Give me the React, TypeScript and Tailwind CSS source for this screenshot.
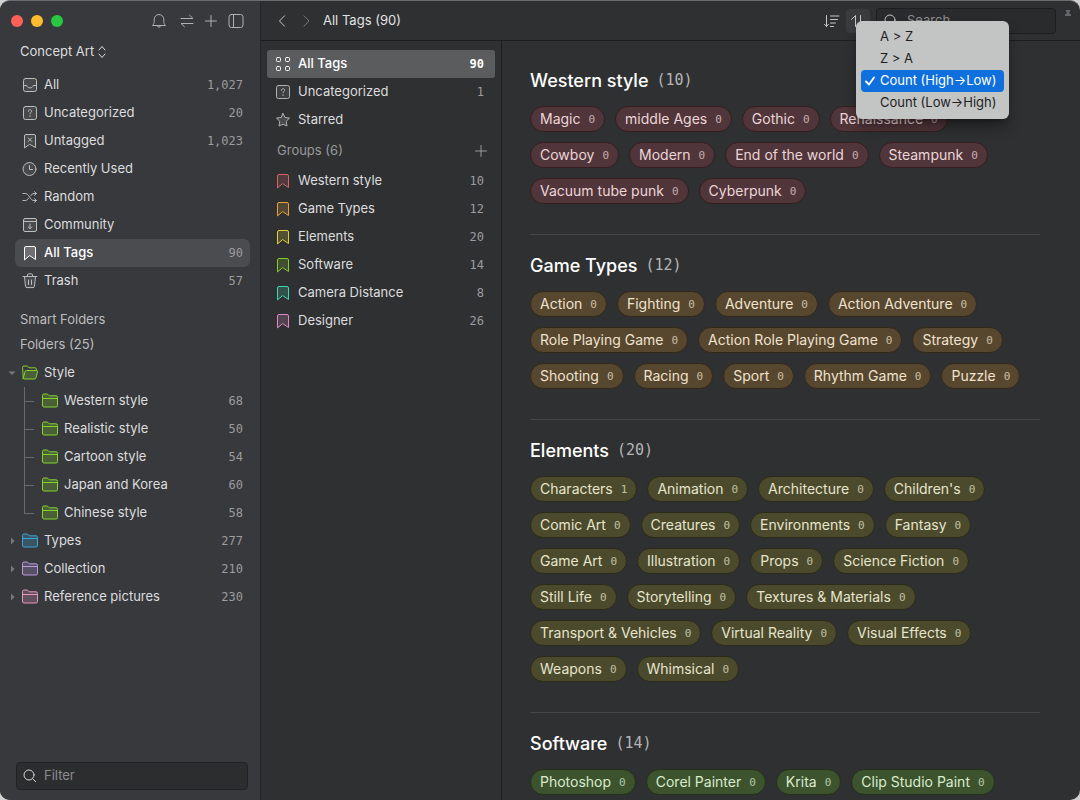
import React, { useState } from 'react';
import clsx from 'clsx';

const svgProps = {
  viewBox: '0 0 16 16',
  width: 16,
  height: 16,
  fill: 'none',
  stroke: 'currentColor',
  strokeLinecap: 'round' as const,
  strokeLinejoin: 'round' as const,
  'aria-hidden': true,
};

const icons: Record<string, React.ReactNode> = {
  inbox: (
    <>
      <rect x="1.5" y="1.5" width="13" height="13" rx="2" fill="currentColor" fillOpacity="0.12" />
      <path d="M1.5 8.5h3.2c.4 1.5 1.6 2.4 3.3 2.4s2.900-.9 3.300-2.400h3.200" />
    </>
  ),
  question: (
    <>
      <rect x="1.5" y="1.5" width="13" height="13" rx="2" fill="currentColor" fillOpacity="0.12" />
      <path d="M6.400 6.300c0-1 .7-1.600 1.600-1.600s1.600.6 1.600 1.500c0 1.200-1.600 1.200-1.600 2.600" />
      <path d="M8 11v.2" strokeWidth="1.3" />
    </>
  ),
  untagged: (
    <>
      <path d="M2.5 14.5V3A1.5 1.5 0 0 1 4 1.5h8A1.5 1.5 0 0 1 13.5 3v11.5L8 11.5z" fill="currentColor" fillOpacity="0.12" />
      <path d="M6.200 4.900l3.600 3.600M9.800 4.900L6.200 8.500" />
    </>
  ),
  clock: (
    <>
      <circle cx="7.5" cy="8" r="6.5" fill="currentColor" fillOpacity="0.12" />
      <path d="M7.5 4.5V8.5h3" />
    </>
  ),
  shuffle: (
    <>
      <path d="M1 4.500h2.500c3.500 0 4.500 7 8.500 7h2M1 11.500h2.500c1.300 0 2.200-1 3-2.300M8.800 6.700c.8-1.300 1.700-2.200 3.200-2.200h2" />
      <path d="M12.500 2.700l2 1.800-2 1.800M12.500 9.700l2 1.800-2 1.800" />
    </>
  ),
  community: (
    <>
      <rect x="1.5" y="1.5" width="13" height="13" rx="1.5" fill="currentColor" fillOpacity="0.12" />
      <path d="M1.5 4.500h13M8 7v4.500M6.300 10L8 11.700 9.700 10" />
    </>
  ),
  bookmark: (
    <path d="M2.500 14.500V3A1.500 1.500 0 0 1 4 1.500h8A1.500 1.500 0 0 1 13.500 3v11.500L8 10.800z" fill="currentColor" fillOpacity="0.2" />
  ),
  trash: (
    <>
      <path d="M1 3.500h14M5.500 3.300V2A1.200 1.200 0 0 1 6.700.8h2.600A1.200 1.200 0 0 1 10.500 2v1.300M6.500 7v4.500M9.500 7v4.500" />
      <path d="M2.500 3.500l1 9.800a1.500 1.500 0 0 0 1.500 1.300h6a1.500 1.500 0 0 0 1.500-1.300l1-9.800" fill="currentColor" fillOpacity="0.12" />
    </>
  ),
  grid: (
    <>
      <rect x="1.5" y="1.5" width="4" height="4" rx="1" />
      <rect x="10.500" y="1.5" width="4" height="4" rx="1" />
      <rect x="1.5" y="10.500" width="4" height="4" rx="1" />
      <rect x="10.500" y="10.500" width="4" height="4" rx="1" />
    </>
  ),
  star: (
    <path d="M8 1.500l2 4 4.500.6-3.300 3.200.8 4.700L8 12.200l-4 1.800.8-4.700L1.500 6.100 6 5.500z" fill="currentColor" fillOpacity="0.2" />
  ),
  folder: (
    <>
      <path d="M.5 12.500v-10A1.500 1.500 0 0 1 2 1h3.400l1.800 1.800H14a1.500 1.500 0 0 1 1.500 1.500v8.200A1.500 1.500 0 0 1 14 14H2A1.500 1.500 0 0 1 .5 12.500z" fill="currentColor" fillOpacity="0.25" />
      <path d="M.5 5.500h15" />
    </>
  ),
  folderOpen: (
    <>
      <path d="M1.200 13.200L.6 2.500A1.400 1.400 0 0 1 2 1h3.200L7 2.800h6a1.400 1.400 0 0 1 1.400 1.400v1.300" />
      <path d="M1.200 13.300L3 6.700a1.500 1.500 0 0 1 1.500-1.200h10a1 1 0 0 1 1 1.300l-1.500 6A1.500 1.500 0 0 1 12.500 14H1.900a.7.700 0 0 1-.7-.7z" fill="currentColor" fillOpacity="0.25" />
    </>
  ),
  search: (
    <>
      <circle cx="7" cy="7" r="5" />
      <path d="M10.700 10.700l3 3" />
    </>
  ),
  bell: (
    <path d="M1.800 12.200c1-1.200 1.400-2 1.400-3.700V6.300a4.800 4.800 0 0 1 9.600 0v2.200c0 1.700.4 2.500 1.400 3.700zM6.300 12.500a1.700 1.700 0 0 0 3.400 0" />
  ),
  swap: <path d="M2 5.500h12L10.500 2.200M14 10.500H2l3.500 3.300" />,
  plus: <path d="M8 2.500v11M2.500 8h11" />,
  panel: (
    <>
      <rect x="1" y="1.5" width="14" height="13" rx="2.5" />
      <path d="M5.500 1.500v13" />
    </>
  ),
  left: <path d="M10.500 2.800L5.500 8l5 5.200" />,
  right: <path d="M6 2.800L11 8l-5 5.200" />,
  sort: <path d="M2.500 2.500v11M.5 11.300l2 2.200 2-2.200M6.500 3h8.500M6.500 6.500h7M6.500 10h5M6.500 13.500h3" />,
  order: <path d="M5.500 13.500v-11L1.500 6.500M10.500 2.500v11L14.500 9.500" />,
};

function Icon({ name, className }: { name: string; className?: string }) {
  return (
    <svg {...svgProps} className={clsx('shrink-0', className)}>
      {icons[name]}
    </svg>
  );
}

const libraryItems = [
  { icon: 'inbox', label: 'All', count: '1,027' },
  { icon: 'question', label: 'Uncategorized', count: '20' },
  { icon: 'untagged', label: 'Untagged', count: '1,023' },
  { icon: 'clock', label: 'Recently Used' },
  { icon: 'shuffle', label: 'Random' },
  { icon: 'community', label: 'Community' },
  { icon: 'bookmark', label: 'All Tags', count: '90' },
  { icon: 'trash', label: 'Trash', count: '57' },
];

const styleFolders = [
  { label: 'Western style', count: 68 },
  { label: 'Realistic style', count: 50 },
  { label: 'Cartoon style', count: 54 },
  { label: 'Japan and Korea', count: 60 },
  { label: 'Chinese style', count: 58 },
];

const otherFolders = [
  { label: 'Types', count: 277, color: 'text-[#3ba6d8]' },
  { label: 'Collection', count: 210, color: 'text-[#b99ae0]' },
  { label: 'Reference pictures', count: 230, color: 'text-[#e597c0]' },
];

const tagGroups = [
  { label: 'Western style', count: 10, color: 'text-[#d9636b]' },
  { label: 'Game Types', count: 12, color: 'text-[#e8a23d]' },
  { label: 'Elements', count: 20, color: 'text-[#e0d13a]' },
  { label: 'Software', count: 14, color: 'text-[#84cc2e]' },
  { label: 'Camera Distance', count: 8, color: 'text-[#3fd6b0]' },
  { label: 'Designer', count: 26, color: 'text-[#dc8cc4]' },
];

const sections = [
  {
    title: 'Western style',
    count: 10,
    pill: 'bg-[#50353a] border-[#351d20] text-[#ecd5d7]',
    tags: ['Magic', 'middle Ages', 'Gothic', 'Renaissance', 'Cowboy', 'Modern', 'End of the world', 'Steampunk', 'Vacuum tube punk', 'Cyberpunk'],
  },
  {
    title: 'Game Types',
    count: 12,
    pill: 'bg-[#57472e] border-[#33291a] text-[#efe2cf]',
    tags: ['Action', 'Fighting', 'Adventure', 'Action Adventure', 'Role Playing Game', 'Action Role Playing Game', 'Strategy', 'Shooting', 'Racing', 'Sport', 'Rhythm Game', 'Puzzle'],
  },
  {
    title: 'Elements',
    count: 20,
    pill: 'bg-[#4b4a2c] border-[#2c2b18] text-[#e6e4cd]',
    tags: ['Characters', 'Animation', 'Architecture', "Children's", 'Comic Art', 'Creatures', 'Environments', 'Fantasy', 'Game Art', 'Illustration', 'Props', 'Science Fiction', 'Still Life', 'Storytelling', 'Textures & Materials', 'Transport & Vehicles', 'Virtual Reality', 'Visual Effects', 'Weapons', 'Whimsical'],
  },
  {
    title: 'Software',
    count: 14,
    pill: 'bg-[#3c532e] border-[#22311a] text-[#d9ebcd]',
    tags: ['Photoshop', 'Corel Painter', 'Krita', 'Clip Studio Paint'],
  },
];

const sortOptions = ['A > Z', 'Z > A', 'Count (High→Low)', 'Count (Low→High)'];

function Count({ children, className }: { children: React.ReactNode; className?: string }) {
  return (
    <span className={clsx("ml-auto font-['DejaVu_Sans_Mono',monospace] text-xs", className ?? 'text-[#9b9c9f]')}>
      {children}
    </span>
  );
}

function Sidebar() {
  const [active, setActive] = useState('All Tags');

  return (
    <aside className="flex w-[261px] shrink-0 flex-col border-r border-[#232426] bg-[#38393c]">
      <div className="flex h-10 items-center pr-4 pl-[11px] text-[#b0b1b3]">
        <div className="flex gap-2">
          <span className="size-3 rounded-full bg-[#fe5f57]" />
          <span className="size-3 rounded-full bg-[#febc2e]" />
          <span className="size-3 rounded-full bg-[#28c840]" />
        </div>
        <button aria-label="Notifications" className="ml-auto"><Icon name="bell" /></button>
        <button aria-label="Switch library" className="ml-3"><Icon name="swap" /></button>
        <button aria-label="Add" className="ml-2"><Icon name="plus" /></button>
        <button aria-label="Toggle sidebar" className="ml-[9px]"><Icon name="panel" /></button>
      </div>

      <button className="flex h-[22px] items-center gap-1 self-start pl-5">
        Concept Art
        <svg {...svgProps} viewBox="0 0 8 14" width="8" height="14">
          <path d="M1 5l3-3.500L7 5M1 9l3 3.500L7 9" />
        </svg>
      </button>

      <nav className="mt-2 pr-2.5 pl-[15px]">
        {libraryItems.map((item) => (
          <button
            key={item.label}
            onClick={() => setActive(item.label)}
            className={clsx(
              'flex h-7 w-full items-center gap-1.5 rounded-md px-[7px]',
              active === item.label && 'bg-[#4b4c50] font-medium text-white'
            )}
          >
            <Icon name={item.icon} className={active === item.label ? '' : 'text-[#bcbdbf]'} />
            {item.label}
            {item.count && <Count>{item.count}</Count>}
          </button>
        ))}
      </nav>

      <h2 className="mt-3 h-[25px] pl-5 leading-[25px] text-[#bcbdbf]">Smart Folders</h2>
      <h2 className="h-[25px] pl-5 leading-[25px] text-[#bcbdbf]">Folders (25)</h2>

      <div className="mt-0.5 pr-[17px] pl-2">
        <button className="flex h-7 w-full items-center">
          <svg viewBox="0 0 8 8" width="8" height="8" className="mr-1.5 shrink-0" aria-hidden="true">
            <path d="M.5 2.500h7L4 6z" fill="#77787b" />
          </svg>
          <Icon name="folderOpen" className="mr-1.5 text-[#84d32c]" />
          Style
        </button>
        <ul>
          {styleFolders.map((folder, i) => (
            <li key={folder.label} className="flex h-7 items-center pl-4">
              <span className="flex h-7 w-[10px] shrink-0 flex-col">
                <span className="h-[15px] border-b border-l border-[#68696c]" />
                <span className={clsx('flex-1', i < styleFolders.length - 1 && 'border-l border-[#68696c]')} />
              </span>
              <button className="ml-2 flex flex-1 items-center gap-1.5">
                <Icon name="folder" className="text-[#84d32c]" />
                {folder.label}
                <Count>{folder.count}</Count>
              </button>
            </li>
          ))}
        </ul>
        {otherFolders.map((folder) => (
          <button key={folder.label} className="flex h-7 w-full items-center">
            <svg viewBox="0 0 8 8" width="8" height="8" className="mr-1.5 shrink-0" aria-hidden="true">
              <path d="M3 .5v7L6.500 4z" fill="#77787b" />
            </svg>
            <Icon name="folder" className={clsx('mr-1.5', folder.color)} />
            {folder.label}
            <Count>{folder.count}</Count>
          </button>
        ))}
      </div>

      <label className="mt-auto mr-3 mb-2.5 ml-4 flex h-7 items-center gap-1.5 rounded border border-[#212224] bg-[#2c2d2f] pl-[5px]">
        <Icon name="search" className="text-[#d5d6d8]" />
        <input
          type="text"
          aria-label="Filter"
          placeholder="Filter"
          className="min-w-0 flex-1 bg-transparent outline-none placeholder:text-[#8b8c8f]"
        />
      </label>
    </aside>
  );
}

function GroupList() {
  return (
    <nav className="flex w-[241px] shrink-0 flex-col border-r border-[#1d1e1f] px-1.5 pt-[9px]">
      <button className="flex h-7 items-center gap-[7px] rounded-[3px] bg-[#5b5c5e] pr-[11px] pl-2 font-medium text-white">
        <Icon name="grid" />
        All Tags
        <Count className="font-bold text-white">90</Count>
      </button>
      <button className="flex h-7 items-center gap-[7px] pr-[11px] pl-2">
        <Icon name="question" className="text-[#b0b1b3]" />
        Uncategorized
        <Count>1</Count>
      </button>
      <button className="flex h-7 items-center gap-[7px] pr-[11px] pl-2">
        <Icon name="star" className="text-[#b0b1b3]" />
        Starred
      </button>
      <div className="flex h-[33px] items-center justify-between pt-px pr-1.5 pl-2.5 text-[#98999b]">
        <h2>Groups (6)</h2>
        <button aria-label="Add group"><Icon name="plus" /></button>
      </div>
      {tagGroups.map((group) => (
        <button key={group.label} className="flex h-7 items-center gap-[7px] pr-[11px] pl-2">
          <Icon name="bookmark" className={group.color} />
          {group.label}
          <Count>{group.count}</Count>
        </button>
      ))}
    </nav>
  );
}

function SortMenu() {
  const [selected, setSelected] = useState('Count (High→Low)');

  return (
    <div className="relative ml-1.5">
      <button aria-label="Sort order" className="flex size-6 items-center justify-center rounded bg-[#3a3b3d]">
        <Icon name="order" />
      </button>
      <div
        role="menu"
        className="absolute top-3 left-2.5 z-10 w-[153px] rounded-md bg-[#c3c4c4] p-[5px] text-[#1e1e1f] shadow-lg shadow-black/40"
      >
        {sortOptions.map((option) => (
          <button
            key={option}
            role="menuitemradio"
            aria-checked={selected === option}
            onClick={() => setSelected(option)}
            className={clsx(
              'flex h-[22px] w-full items-center rounded pt-px pl-1 whitespace-nowrap',
              selected === option && 'bg-[#0f6fdc] text-white'
            )}
          >
            <span className="w-[15px] shrink-0">
              {selected === option && (
                <svg {...svgProps} viewBox="0 0 10 10" width="10" height="10" strokeWidth="1.8">
                  <path d="M1 5.500L4 8.500 9 1.500" />
                </svg>
              )}
            </span>
            {option}
          </button>
        ))}
      </div>
    </div>
  );
}

function Toolbar() {
  return (
    <header className="flex h-10 shrink-0 items-center border-b border-[#1d1e1f] pl-[13px] text-[#c5c6c8]">
      <button aria-label="Back"><Icon name="left" /></button>
      <button aria-label="Forward" className="ml-2 text-[#77787a]"><Icon name="right" /></button>
      <h1 className="ml-[9px] text-[#e2e2e4]">All Tags (90)</h1>
      <button aria-label="Sort by" className="ml-auto"><Icon name="sort" /></button>
      <SortMenu />
      <label className="ml-1.5 flex h-[26px] w-[180px] items-center gap-2 rounded border border-[#1d1e1f] bg-[#2a2b2c] pl-1.5">
        <Icon name="search" />
        <input
          type="text"
          aria-label="Search"
          placeholder="Search"
          className="min-w-0 flex-1 bg-transparent outline-none placeholder:text-[#8b8c8f]"
        />
      </label>
      <svg viewBox="0 0 8 8" width="8" height="8" className="mx-2 mt-2 self-start text-[#66676a]" aria-hidden="true">
        <path d="M1.500 1h4.500v1.500L4.800 4 7 5.500V7H1V5.500L3.200 4z" fill="currentColor" />
      </svg>
    </header>
  );
}

function TagSections() {
  return (
    <main className="min-w-0 flex-1 overflow-hidden pt-[9px] pr-10 pl-7">
      {sections.map((section, i) => (
        <section key={section.title} className={clsx('pb-[30px]', i > 0 && 'border-t border-[#454648]')}>
          <h2 className="flex h-14 items-center gap-2 pt-1.5 text-lg font-medium text-white">
            {section.title}
            <span className="font-['DejaVu_Sans_Mono',monospace] text-[15px] font-normal text-[#b4b5b7]">({section.count})</span>
          </h2>
          <div className="flex flex-wrap gap-2.5">
            {section.tags.map((tag) => (
              <button
                key={tag}
                className={clsx('flex h-[26px] items-center gap-2 rounded-full border px-[9px] text-sm whitespace-nowrap', section.pill)}
              >
                {tag}
                <span className="pt-px font-['DejaVu_Sans_Mono',monospace] text-[11px] opacity-75">{tag === 'Characters' ? 1 : 0}</span>
              </button>
            ))}
          </div>
        </section>
      ))}
    </main>
  );
}

export default function App() {
  return (
    <div className="h-screen bg-[#d0d0d0]">
      <div className="flex h-full overflow-hidden rounded-[10px] border-t border-[#6b6c6e] bg-[#2f3031] font-[Inter,sans-serif] text-[13px] text-[#dcdddf]">
        <Sidebar />
        <div className="flex min-w-0 flex-1 flex-col">
          <Toolbar />
          <div className="flex min-h-0 flex-1">
            <GroupList />
            <TagSections />
          </div>
        </div>
      </div>
    </div>
  );
}
